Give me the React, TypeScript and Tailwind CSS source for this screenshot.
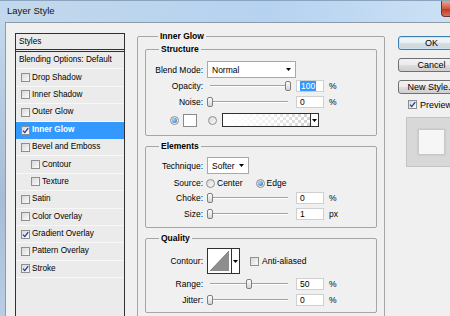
import type { ReactNode } from "react"

// Photoshop "Layer Style" dialog, Inner Glow page, Windows 7 chrome.

const styles: { name: string; on?: boolean; indent?: boolean; active?: boolean }[] = [
  { name: "Drop Shadow" },
  { name: "Inner Shadow" },
  { name: "Outer Glow" },
  { name: "Inner Glow", on: true, active: true },
  { name: "Bevel and Emboss" },
  { name: "Contour", indent: true },
  { name: "Texture", indent: true },
  { name: "Satin" },
  { name: "Color Overlay" },
  { name: "Gradient Overlay", on: true },
  { name: "Pattern Overlay" },
  { name: "Stroke", on: true },
]

function Check({ on }: { on?: boolean }) {
  return (
    <span className="flex size-[9px] shrink-0 items-center justify-center border border-[#8e8f8f] bg-[linear-gradient(135deg,#d8d8d8,#fbfbfb)]">
      {on && (
        <svg viewBox="0 0 7 7" className="size-[7px]">
          <path d="M1 3.6 2.8 5.6 6.2 1.1" fill="none" stroke="#1f3c95" strokeWidth="1.3" />
        </svg>
      )}
    </span>
  )
}

function Radio({ on }: { on?: boolean }) {
  return (
    <span className="flex size-[9px] shrink-0 items-center justify-center rounded-full border border-[#8e8f8f] bg-[linear-gradient(135deg,#d8d8d8,#fbfbfb)]">
      {on && <span className="size-[5px] rounded-full bg-[radial-gradient(circle_at_35%_35%,#a6d8ff,#1a66bd)]" />}
    </span>
  )
}

function Arrow() {
  return (
    <svg viewBox="0 0 5 3" className="h-[3px] w-[5px] shrink-0">
      <path d="M0 0h5L2.5 3z" fill="#000" />
    </svg>
  )
}

function Label({ children }: { children: ReactNode }) {
  return <span className="w-[57px] shrink-0 text-right">{children}</span>
}

function Slider({ value }: { value: number }) {
  return (
    <div className="relative flex h-[12px] w-[84px] shrink-0 items-center px-[3px]">
      <div className="h-[2px] w-full border-t border-[#a3a3a3] bg-white" />
      <span
        className="absolute top-[1px] h-[10px] w-[6px] rounded-[2px] border border-[#7f7f7f] bg-[linear-gradient(#fdfdfd,#d4d4d4)]"
        style={{ left: (value / 100) * 78 }}
      />
    </div>
  )
}

function Field({ value, selected }: { value: string; selected?: boolean }) {
  return (
    <div className="flex h-[12px] w-[28px] shrink-0 items-center border border-[#cfcfcf] bg-white pl-[3px]">
      {selected ? <span className="bg-[#3399ff] px-[1px] text-white">{value}</span> : value}
    </div>
  )
}

function SliderRow({
  label,
  value,
  field,
  unit = "%",
  selected,
  className,
}: {
  label: string
  value: number
  field: string
  unit?: string
  selected?: boolean
  className: string
}) {
  return (
    <div className={className}>
      <Label>{label}</Label>
      <div className="ml-[4px]">
        <Slider value={value} />
      </div>
      <div className="ml-[5px]">
        <Field value={field} selected={selected} />
      </div>
      <span className="ml-[5px]">{unit}</span>
    </div>
  )
}

function Group({ title, children, className }: { title: string; children: ReactNode; className: string }) {
  return (
    <fieldset className={className}>
      <legend className="ml-[13px] px-[2px] text-[8.5px] leading-[10px] font-bold">{title}</legend>
      {children}
    </fieldset>
  )
}

function Button({ children, primary }: { children: ReactNode; primary?: boolean }) {
  return (
    <div
      className={
        primary
          ? "flex h-[14px] w-[67px] items-center justify-center rounded-[3px] border border-[#3c7fb1] bg-[linear-gradient(#f4f8fb,#e9eef2_50%,#d6dde3_50%,#cdd5dc)] text-[9px] shadow-[inset_0_0_0_1px_#c4e5f6]"
          : "flex h-[14px] w-[67px] items-center justify-center rounded-[3px] border border-[#707070] bg-[linear-gradient(#f2f2f2,#ebebeb_50%,#dddddd_50%,#cfcfcf)] text-[9px]"
      }
    >
      {children}
    </div>
  )
}

export default function App() {
  return (
    <div className="h-[316px] w-[450px] overflow-hidden bg-[#c4d8ee] font-['Liberation_Sans',Arial,sans-serif] text-black">
      <div className="flex w-[484px] flex-col">
        {/* title bar */}
        <div className="flex h-[22px] items-start border-t border-[#8aa3be] bg-[linear-gradient(90deg,#c3d8ec,#b5d2f0_55%,#d0e3f6)]">
          <span className="mt-[4px] ml-[7px] text-[9.5px] leading-[12px] text-[#141414]">Layer Style</span>
          <div className="ml-auto h-[16px] w-[43px] rounded-b-[4px] border border-t-0 border-[#7a3026] bg-[linear-gradient(#e6a594,#d0583f_50%,#bf3a20_55%,#d6705a)]" />
        </div>

        <div className="flex">
          <div className="h-[294px] w-[5px] shrink-0 bg-[linear-gradient(#c4d8ec,#a6bdd5_60%,#b9cee4)]" />
          <div className="flex h-[294px] flex-1 items-start border-t border-l border-[#8d9aa8] bg-[#f0f0f0] text-[8.5px] leading-[10px]">
            {/* styles list */}
            <div className="mt-[10px] ml-[9px] h-[300px] w-[110px] shrink-0 border border-[#303030] bg-[#ebebeb] text-[8.2px]">
              <div className="flex h-[18px] items-center border-b-[3px] border-double border-[#303030] pl-[3px]">Styles</div>
              <div className="flex h-[17.4px] items-center border-b border-[#f7f7f7] pl-[3px]">Blending Options: Default</div>
              {styles.map((s) => (
                <div
                  key={s.name}
                  className={
                    s.active
                      ? "flex h-[17.4px] items-center gap-[2px] bg-[#3399ff] pl-[5px] font-bold text-white"
                      : s.indent
                        ? "flex h-[17.4px] items-center gap-[2px] border-b border-[#f7f7f7] pl-[15px]"
                        : "flex h-[17.4px] items-center gap-[2px] border-b border-[#f7f7f7] pl-[5px]"
                  }
                >
                  <Check on={s.on} />
                  <span>{s.name}</span>
                </div>
              ))}
            </div>

            {/* settings */}
            <Group title="Inner Glow" className="mt-[8px] ml-[12px] w-[248px] shrink-0 rounded-[2px] border border-[#a6a6a6] px-[7px]">
              <Group title="Structure" className="mt-[3px] rounded-[2px] border border-[#a6a6a6] pb-[8px]">
                <div className="mt-[7px] flex h-[17px] items-center">
                  <Label>Blend Mode:</Label>
                  <div className="ml-[4px] flex h-[17px] w-[89px] items-center justify-between border border-[#a9a9a9] bg-white px-[4px]">
                    <span>Normal</span>
                    <Arrow />
                  </div>
                </div>
                <SliderRow label="Opacity:" value={100} field="100" selected className="mt-[2px] flex h-[12px] items-center" />
                <SliderRow label="Noise:" value={0} field="0" className="mt-[4px] flex h-[12px] items-center" />
                <div className="mt-[5px] flex h-[14px] items-center pl-[24px]">
                  <Radio on />
                  <span className="ml-[4px] h-[13px] w-[14px] border border-[#8a8a8a] bg-white" />
                  <span className="ml-[11px]">
                    <Radio />
                  </span>
                  <div className="ml-[5px] flex h-[14px] w-[97px] border border-[#303030]">
                    <div className="h-full flex-1 bg-[conic-gradient(#d2d2d2_25%,#fff_0_50%,#d2d2d2_0_75%,#fff_0)] bg-[length:6px_6px]">
                      <div className="h-full w-full bg-gradient-to-r from-white via-white/70 to-transparent" />
                    </div>
                    <div className="flex w-[8px] items-center justify-center border-l border-[#303030] bg-white">
                      <Arrow />
                    </div>
                  </div>
                </div>
              </Group>

              <Group title="Elements" className="mt-[5px] rounded-[2px] border border-[#a6a6a6] pb-[7px]">
                <div className="mt-[6px] flex h-[17px] items-center">
                  <Label>Technique:</Label>
                  <div className="ml-[4px] flex h-[17px] w-[42px] items-center justify-between border border-[#a9a9a9] bg-white px-[4px]">
                    <span>Softer</span>
                    <Arrow />
                  </div>
                </div>
                <div className="mt-[3px] flex h-[12px] items-center">
                  <Label>Source:</Label>
                  <span className="ml-[3px]">
                    <Radio />
                  </span>
                  <span className="ml-[2px]">Center</span>
                  <span className="ml-[13px]">
                    <Radio on />
                  </span>
                  <span className="ml-[2px]">Edge</span>
                </div>
                <SliderRow label="Choke:" value={0} field="0" className="mt-[3px] flex h-[12px] items-center" />
                <SliderRow label="Size:" value={0} field="1" unit="px" className="mt-[4px] flex h-[12px] items-center" />
              </Group>

              <Group title="Quality" className="mt-[5px] rounded-[2px] border border-[#a6a6a6] pb-[6px]">
                <div className="mt-[5px] flex h-[26px] items-center">
                  <Label>Contour:</Label>
                  <div className="ml-[4px] flex h-[26px] w-[33px] border border-[#303030] bg-white">
                    <svg viewBox="0 0 23 24" className="h-full w-[23px]" preserveAspectRatio="none">
                      <path d="M2 22 21 2V22Z" fill="#8e8e8e" />
                      <path d="M2 22 21 2" stroke="#6a6a6a" strokeWidth="0.8" fill="none" />
                    </svg>
                    <div className="flex flex-1 items-center justify-center border-l border-[#303030]">
                      <Arrow />
                    </div>
                  </div>
                  <span className="ml-[10px]">
                    <Check />
                  </span>
                  <span className="ml-[3px]">Anti-aliased</span>
                </div>
                <SliderRow label="Range:" value={50} field="50" className="mt-[4px] flex h-[12px] items-center" />
                <SliderRow label="Jitter:" value={0} field="0" className="mt-[4px] flex h-[12px] items-center" />
              </Group>

              <div className="mt-[5px] ml-[45px] flex gap-[4px]">
                <div className="flex h-[20px] w-[65px] items-center justify-center rounded-[3px] border border-[#707070] bg-[linear-gradient(#f2f2f2,#dddddd)]">
                  Make Default
                </div>
                <div className="flex h-[20px] w-[67px] items-center justify-center rounded-[3px] border border-[#707070] bg-[linear-gradient(#f2f2f2,#dddddd)]">
                  Reset to Default
                </div>
              </div>
            </Group>

            {/* buttons + preview */}
            <div className="mt-[13px] ml-[13px] flex w-[67px] shrink-0 flex-col">
              <div className="flex flex-col gap-[8px]">
                <Button primary>OK</Button>
                <Button>Cancel</Button>
                <Button>New Style...</Button>
              </div>
              <div className="mt-[6px] ml-[10px] flex h-[9px] items-center gap-[3px] text-[9px]">
                <Check on />
                <span>Preview</span>
              </div>
              <div className="mt-[8px] ml-[8px] flex h-[50px] w-[51px] items-center justify-center border border-[#c4c4c4] bg-[#d8d8d8]">
                <div className="h-[26px] w-[27px] border border-[#c8c8c8] bg-[#f6f6f6] shadow-[0_0_2px_#bdbdbd]" />
              </div>
            </div>
          </div>
        </div>
      </div>
    </div>
  )
}
